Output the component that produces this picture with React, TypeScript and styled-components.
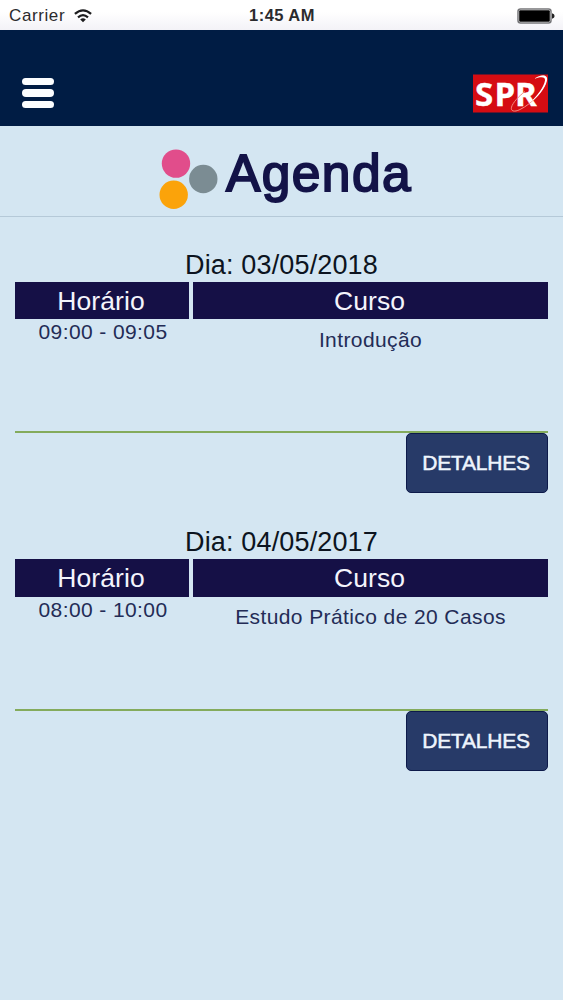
import React from "react";
import styled, { createGlobalStyle } from "styled-components";

const GlobalStyle = createGlobalStyle`
  * { box-sizing: border-box; }
  body { margin: 0; background: #d4e6f2; }
`;

const Screen = styled.div`
  display: flex;
  flex-direction: column;
  height: 1000px;
  background: #d4e6f2;
  font-family: "Liberation Sans", Arial, sans-serif;
`;

const StatusBar = styled.div`
  display: grid;
  grid-template-columns: 1fr auto 1fr;
  align-items: center;
  height: 30px;
  padding: 1px 8px 0 9px;
  background: linear-gradient(#ffffff 40%, #f3f2f7);
  color: #2b2b2e;
  font-size: 17px;
`;

const Carrier = styled.div`
  display: flex;
  align-items: center;
  gap: 9px;
  letter-spacing: 0.6px;
`;

const Clock = styled.div`
  font-size: 16.5px;
  font-weight: bold;
  letter-spacing: 0.45px;
`;

const BatterySlot = styled.div`
  display: flex;
  justify-content: flex-end;
`;

const NavBar = styled.header`
  display: flex;
  justify-content: space-between;
  align-items: flex-start;
  height: 96px;
  padding: 44px 15px 0 22px;
  background: #001c44;
`;

const MenuButton = styled.button`
  display: flex;
  flex-direction: column;
  gap: 4px;
  margin: 4px 0 0;
  padding: 0;
  border: 0;
  background: none;
`;

const MenuBar = styled.span`
  width: 32px;
  height: 7.4px;
  border-radius: 4px;
  background: #fbfdff;
`;

const Logo = styled.svg`
  display: block;
  overflow: visible;
`;

const TitleBar = styled.div`
  display: flex;
  height: 91px;
  padding-left: 158px;
  border-bottom: 1px solid #b5c9d8;
`;

const Title = styled.h1`
  margin: 17px 0 0 8px;
  color: #131348;
  font-size: 51.5px;
  line-height: 60px;
  font-weight: normal;
  letter-spacing: 1.4px;
  -webkit-text-stroke: 1.9px #131348;
`;

const Dots = styled.svg`
  display: block;
  margin-top: 22px;
`;

const Agenda = styled.main`
  display: flex;
  flex-direction: column;
  gap: 33px;
  padding: 31.5px 15px 0;
`;

const Day = styled.section`
  display: flex;
  flex-direction: column;
  height: 244.5px;
`;

const DayTitle = styled.h2`
  margin: 0;
  height: 33px;
  color: #0c1420;
  font-size: 27px;
  font-weight: normal;
  line-height: 32px;
  letter-spacing: 0.15px;
  text-align: center;
`;

const Columns = styled.div`
  display: grid;
  grid-template-columns: 174px 355px;
  column-gap: 4px;
`;

const HeadCell = styled.div`
  height: 37.5px;
  padding-right: 2px;
  background: #151046;
  color: #f4f4fc;
  font-size: 26.5px;
  line-height: 38px;
  letter-spacing: 0.1px;
  text-align: center;
`;

const Entry = styled(Columns)`
  height: 114px;
  border-bottom: 2px solid #84ab5c;
`;

const Cell = styled.div<{ $top: number; $shift: number }>`
  padding-top: ${(p) => p.$top}px;
  padding-left: ${(p) => p.$shift}px;
  color: #232c56;
  font-size: 21px;
  line-height: 24px;
  letter-spacing: 0.4px;
  text-align: center;
`;

const DetailsButton = styled.button`
  align-self: flex-end;
  width: 142px;
  height: 60px;
  padding: 0 2px 0 0;
  border: 1.5px solid #0d1a4a;
  border-radius: 5px;
  background: #273a68;
  color: #eef5fd;
  font-family: inherit;
  font-size: 21px;
  letter-spacing: -0.25px;
  -webkit-text-stroke: 0.5px #eef5fd;
`;

const days = [
  { date: "03/05/2018", time: "09:00 - 09:05", course: "Introdução" },
  { date: "04/05/2017", time: "08:00 - 10:00", course: "Estudo Prático de 20 Casos" },
];

const WifiIcon = () => (
  <svg width="18" height="14" viewBox="0 0 18 14" fill="none" stroke="#1c1c1e" strokeWidth="2.2">
    <path d="M0.9 4.9 Q9 -2.2 17.1 4.9" />
    <path d="M4 8.3 Q9 3.9 14 8.3" />
    <path d="M6.2 10.5 Q9 8 11.8 10.5 L9 13.3Z" fill="#1c1c1e" stroke="none" />
  </svg>
);

const BatteryIcon = () => (
  <svg width="38" height="16" viewBox="0 0 38 16">
    <rect x="1" y="1" width="33" height="14" rx="2.5" fill="#fff" stroke="#77777a" strokeWidth="1.5" />
    <rect x="2.2" y="2.2" width="30.6" height="11.6" rx="1" fill="#000" />
    <path d="M35 5.2 Q37.6 5.8 37.6 8 Q37.6 10.2 35 10.8Z" fill="#222" />
  </svg>
);

const SprLogo = () => (
  <Logo width="75" height="38" viewBox="0 0 75 38">
    <rect y="0.5" width="75" height="38" fill="#d50c12" />
    <text
      x="2 21.5 42"
      y="31.5"
      fill="#fff"
      stroke="#fff"
      strokeWidth="0.4"
      fontFamily="'Open Sans', sans-serif"
      fontWeight="700"
      fontSize="33"
    >
      SPR
    </text>
    <path
      d="M62 4.5 C69 .5 74 1.2 73.3 6 C72 15 59 30 47 35.5 C41 38.5 37.5 37 38.5 33.2 C39.8 28.5 46 22 52 17.5"
      fill="none"
      stroke="#f58a80"
      strokeWidth="1"
    />
    <path d="M62 4.5 C68 0 75.5 .5 74 6.5 C72 15 65 23 56 30 C64 22 71 13 72 6.5 C72.5 2.5 68 2.5 62 4.5Z" fill="#fff" />
  </Logo>
);

export default function App() {
  return (
    <Screen>
      <GlobalStyle />
      <StatusBar>
        <Carrier>
          Carrier
          <WifiIcon />
        </Carrier>
        <Clock>1:45 AM</Clock>
        <BatterySlot>
          <BatteryIcon />
        </BatterySlot>
      </StatusBar>
      <NavBar>
        <MenuButton aria-label="Menu">
          <MenuBar />
          <MenuBar />
          <MenuBar />
        </MenuButton>
        <SprLogo />
      </NavBar>
      <TitleBar>
        <Dots width="60" height="62" viewBox="0 0 60 62">
          <circle cx="18" cy="15.6" r="14.2" fill="#e14d8b" />
          <circle cx="45.3" cy="31" r="14.2" fill="#7b8c93" />
          <circle cx="15.7" cy="46.8" r="14.2" fill="#fba30a" />
        </Dots>
        <Title>Agenda</Title>
      </TitleBar>
      <Agenda>
        {days.map((day) => (
          <Day key={day.date}>
            <DayTitle>Dia: {day.date}</DayTitle>
            <Columns>
              <HeadCell>Horário</HeadCell>
              <HeadCell>Curso</HeadCell>
            </Columns>
            <Entry>
              <Cell $top={1} $shift={2}>{day.time}</Cell>
              <Cell $top={8.5} $shift={0}>{day.course}</Cell>
            </Entry>
            <DetailsButton>DETALHES</DetailsButton>
          </Day>
        ))}
      </Agenda>
    </Screen>
  );
}
